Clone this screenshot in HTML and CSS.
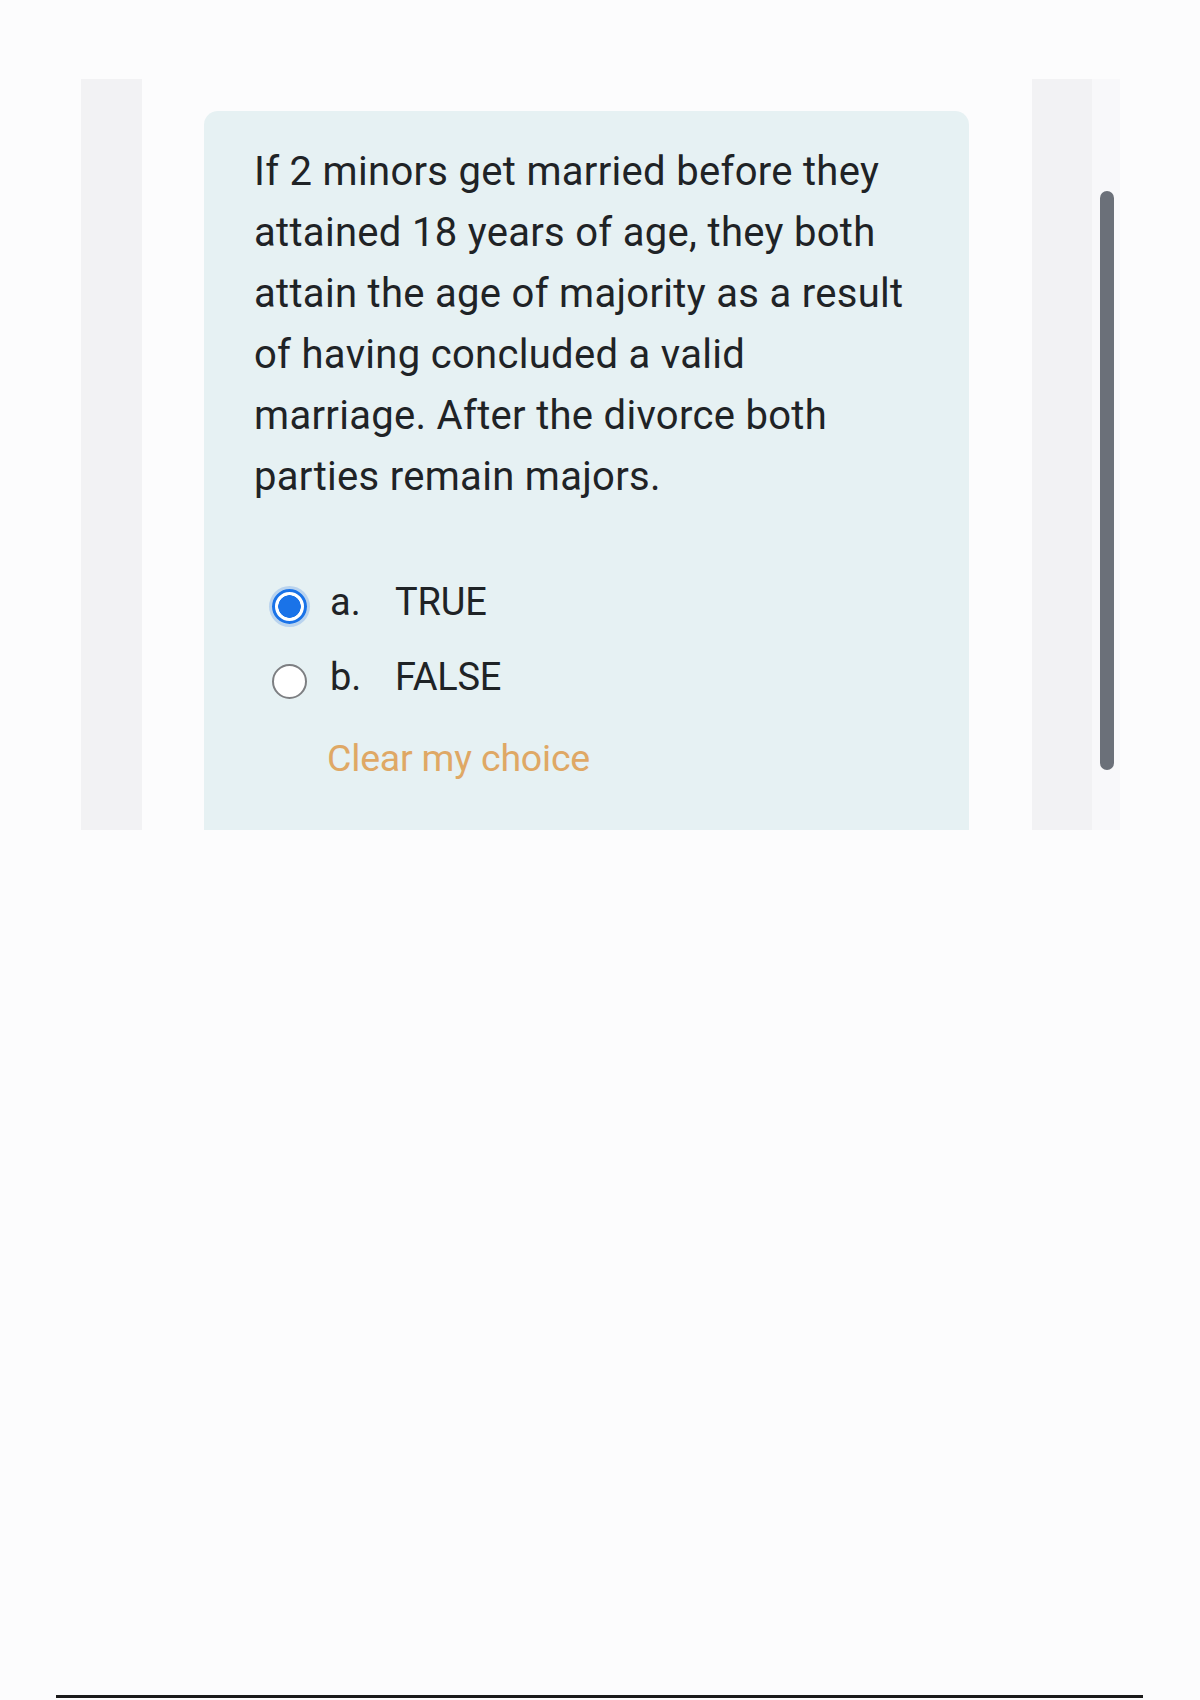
FILE: index.html
```html
<!DOCTYPE html>
<html lang="en">
<head>
<meta charset="utf-8">
<title>Question</title>
<link rel="stylesheet" href="styles.css">
</head>
<body>
<div class="stage">
  <div class="side-left"></div>
  <div class="card">
    <div class="qtext">If 2 minors get married before they attained 18 years of age, they both attain the age of majority as a result of having concluded a valid marriage. After the divorce both parties remain majors.</div>
    <div class="answers">
      <div class="option">
        <span class="radio checked"></span>
        <span class="letter">a.</span>
        <span class="label">TRUE</span>
      </div>
      <div class="option">
        <span class="radio"></span>
        <span class="letter">b.</span>
        <span class="label">FALSE</span>
      </div>
      <div class="clear">Clear my choice</div>
    </div>
  </div>
  <div class="side-right">
    <div class="track"><div class="thumb"></div></div>
  </div>
</div>
<div class="bottom-line"></div>
</body>
</html>
```
FILE: styles.css
```css
html, body {
  margin: 0;
  padding: 0;
}
body {
  background: #fcfcfd;
  font-family: Roboto, "Liberation Sans", sans-serif;
  color: #1f2326;
  width: 1200px;
  height: 1700px;
  overflow: hidden;
}
.stage {
  display: flex;
  align-items: flex-start;
  padding: 79px 0 0 81px;
  height: 751px;
}
.side-left {
  width: 61px;
  height: 751px;
  background: #f2f2f4;
  flex: none;
}
.card {
  margin-left: 62px;
  margin-top: 32px;
  width: 765px;
  height: 719px;
  background: #e6f1f3;
  border-radius: 14px 14px 0 0;
  box-sizing: border-box;
  padding: 30px 0 0 50px;
  flex: none;
}
.qtext {
  width: 658px;
  font-size: 40px;
  line-height: 61px;
  letter-spacing: 0.3px;
}
.answers {
  margin-top: 57px;
  padding-left: 18px;
}
.option {
  display: flex;
  align-items: center;
  height: 75px;
  font-size: 38px;
}
.radio {
  width: 35px;
  height: 35px;
  margin-top: 9px;
  border-radius: 50%;
  border: 2px solid #7d7f82;
  background: #fff;
  box-sizing: border-box;
  flex: none;
}
.radio.checked {
  border: 3px solid #1a73e8;
  box-shadow: 0 0 0 3px #b9d3ee;
  background: radial-gradient(circle, #1a73e8 0 11px, #ffffff 11.5px);
}
.letter {
  margin-left: 23px;
  width: 65px;
}
.label {
  letter-spacing: -0.2px;
}
.clear {
  margin-left: 55px;
  margin-top: 22px;
  font-size: 37.5px;
  color: #dfa865;
  letter-spacing: -0.2px;
}
.side-right {
  margin-left: 63px;
  width: 88px;
  height: 751px;
  display: flex;
  flex: none;
  background: linear-gradient(to right, #f2f2f4 0 60px, #f8f8fa 60px);
}
.track {
  margin-left: 68px;
  padding-top: 112px;
}
.thumb {
  width: 14px;
  height: 579px;
  border-radius: 7px;
  background: #6b7079;
}
.bottom-line {
  margin: 865px 0 0 56px;
  width: 1087px;
  height: 3px;
  background: #1a1a1a;
}
```
